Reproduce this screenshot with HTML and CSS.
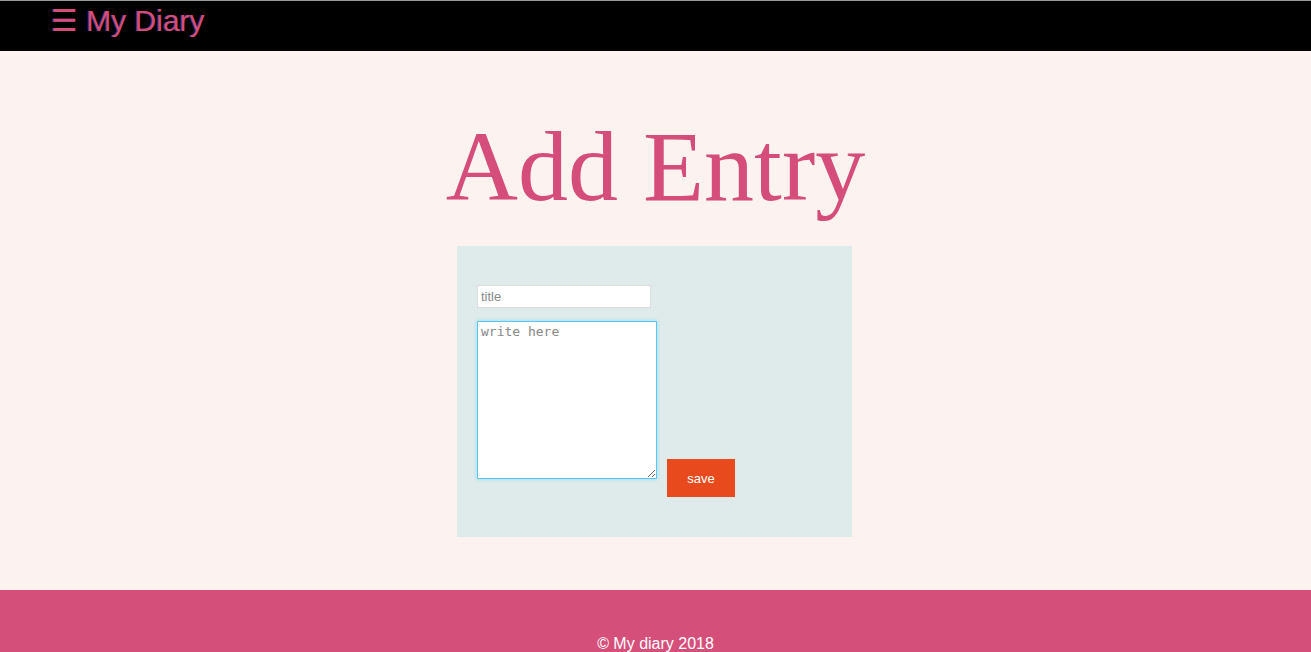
FILE: index.html
```html
<!DOCTYPE html>
<html>
<head>
<meta charset="utf-8">
<link rel="stylesheet" href="styles.css">
</head>
<body>
<header class="topbar">
  <span class="brand">&#9776; My Diary</span>
</header>
<main class="main">
  <h1 class="title">Add Entry</h1>
  <form class="card">
    <input class="title-input" type="text" placeholder="title">
    <div class="row">
      <textarea class="body-input" placeholder="write here" autofocus></textarea>
      <button class="save" type="button">save</button>
    </div>
  </form>
</main>
<footer class="footer">&copy; My diary 2018</footer>
</body>
</html>
```
FILE: styles.css
```css
html, body { margin: 0; padding: 0; }
body {
  background: #fcf3f0;
  font-family: "Liberation Sans", Arial, sans-serif;
  border-top: 1px solid #999;
}
.topbar {
  background: #000;
  height: 50px;
  padding-left: 51px;
  box-sizing: border-box;
}
.brand {
  color: #d44d7b;
  font-family: "Liberation Sans", "DejaVu Sans", sans-serif;
  font-size: 30px;
  line-height: 39px;
  text-shadow: -1px 0 0 rgba(90, 60, 160, 0.75);
}
.main {
  display: flex;
  flex-direction: column;
  align-items: center;
  padding-top: 58px;
  padding-bottom: 53px;
}
.title {
  margin: 0;
  font-family: "Liberation Serif", "Times New Roman", serif;
  font-weight: normal;
  font-size: 100px;
  line-height: 115px;
  color: #d44d7b;
}
.card {
  margin-top: 22px;
  margin-right: 2px;
  width: 395px;
  height: 291px;
  box-sizing: border-box;
  background: #dfebea;
  padding: 39px 20px 0;
}
.title-input {
  display: block;
  width: 174px;
  height: 23px;
  box-sizing: border-box;
  border: 1px solid #dcdcdc;
  padding: 0 3px;
  font-family: "Liberation Sans", Arial, sans-serif;
  font-size: 13px;
  outline: none;
}
.title-input::placeholder { color: #888; }
.row {
  display: flex;
  align-items: flex-end;
  margin-top: 13px;
  gap: 10px;
}
.body-input {
  width: 180px;
  height: 158px;
  box-sizing: border-box;
  border: 1px solid #5bc8ef;
  box-shadow: 0 0 4px #8fd9f3;
  outline: none;
  padding: 2px 3px;
  font-family: "DejaVu Sans Mono", monospace;
  font-size: 13px;
  resize: both;
  margin: 0;
}
.body-input::placeholder { color: #888; }
.save {
  width: 68px;
  height: 38px;
  margin-bottom: -18px;
  background: #e84a1e;
  color: #fff;
  border: none;
  font-family: "Liberation Sans", Arial, sans-serif;
  font-size: 13px;
}
.footer {
  background: #d54f7b;
  color: #fff;
  text-align: center;
  font-size: 16px;
  padding-top: 45px;
  height: 80px;
  box-sizing: border-box;
}
```
